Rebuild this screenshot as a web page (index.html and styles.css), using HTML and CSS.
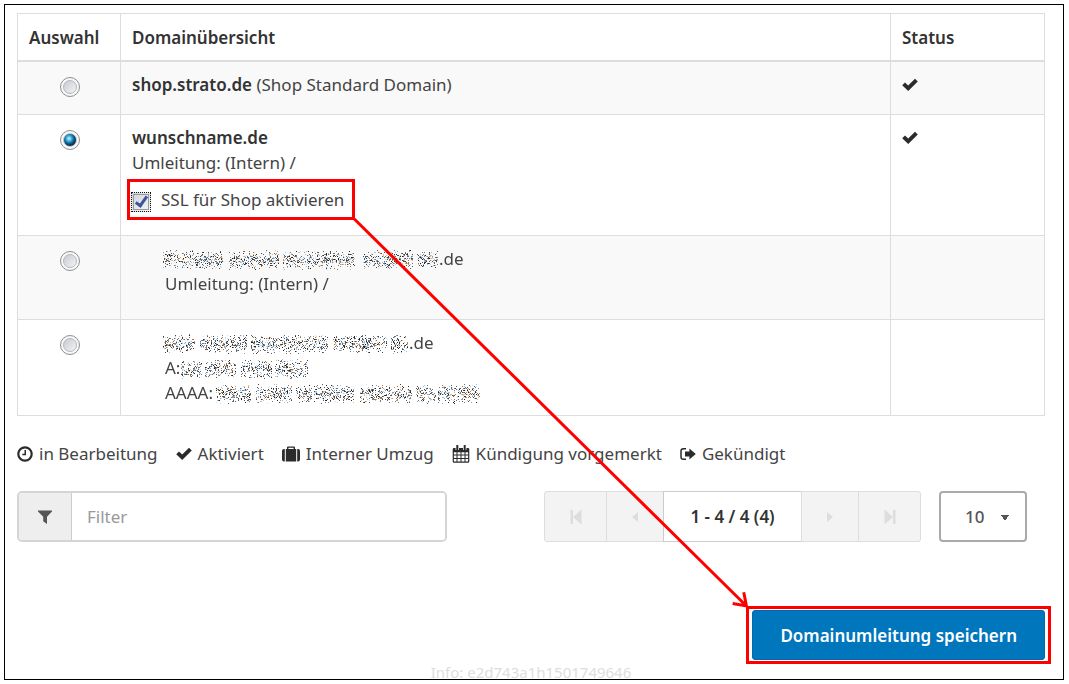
FILE: index.html
```html
<!DOCTYPE html>
<html lang="de">
<head>
  <meta charset="UTF-8" />
  <meta name="viewport" content="width=device-width, initial-scale=1" />
  <title>Domainübersicht</title>
  <link rel="stylesheet" href="styles.css">
</head>
<body>
  <svg class="sprite" aria-hidden="true">
    <symbol id="check" viewBox="0 0 16 16"><path d="M0.2 8.2 L3 5.4 L6.2 8.4 L13 1.8 L15.8 4.5 L6.2 14.1 Z" /></symbol>
    <symbol id="clock" viewBox="0 0 16 16"><circle cx="8" cy="8" r="6.7" fill="none" stroke="currentColor" stroke-width="2.2" /><path d="M7.5 4 H9 V9.2 H5.3 V7.8 H7.5 Z" /></symbol>
    <symbol id="briefcase" viewBox="0 0 18 16"><path d="M5 3 V1.5 Q5 0.5 6 0.5 H12 Q13 0.5 13 1.5 V3 H14.2 V15.5 H3.8 V3 Z M6.4 3 H11.6 V1.8 H6.4 Z M2.8 3 V15.5 H2 Q0 15.5 0 13.5 V5 Q0 3 2 3 Z M15.2 3 H16 Q18 3 18 5 V13.5 Q18 15.5 16 15.5 H15.2 Z" fill-rule="evenodd" /></symbol>
    <symbol id="calendar" viewBox="0 0 17 18"><path d="M1.5 3 H15.5 Q16.8 3 16.8 4.2 V16.6 Q16.8 17.8 15.5 17.8 H1.5 Q0.2 17.8 0.2 16.6 V4.2 Q0.2 3 1.5 3 Z M1.4 7.2 V9.4 H4 V7.2 Z M5 7.2 V9.4 H8 V7.2 Z M9 7.2 V9.4 H12 V7.2 Z M13 7.2 V9.4 H15.6 V7.2 Z M1.4 10.4 V13 H4 V10.4 Z M5 10.4 V13 H8 V10.4 Z M9 10.4 V13 H12 V10.4 Z M13 10.4 V13 H15.6 V10.4 Z M1.4 14 V16.6 H4 V14 Z M5 14 V16.6 H8 V14 Z M9 14 V16.6 H12 V14 Z M13 14 V16.6 H15.6 V14 Z" fill-rule="evenodd" /><path d="M4.8 1.2 V5 M12.2 1.2 V5" stroke="#fff" stroke-width="3.4" /><path d="M4.8 0.6 V5 M12.2 0.6 V5" stroke="currentColor" stroke-width="2" stroke-linecap="round" /></symbol>
    <symbol id="signout" viewBox="0 0 16 16"><path d="M6 2.7 H3.4 Q1 2.7 1 5 V11 Q1 13.3 3.4 13.3 H6" fill="none" stroke="currentColor" stroke-width="1.5" /><path d="M5 5.6 H9.4 V2.4 L15.8 8 L9.4 13.6 V10.4 H5 Z" /></symbol>
    <symbol id="funnel" viewBox="0 0 16 16"><path d="M1 1.5 H15 V2.4 L10 7.8 V15 L6.2 12.2 V7.8 L1 2.4 Z" /></symbol>
    <symbol id="first" viewBox="0 0 12 16"><path d="M0.5 1 H3 V15 H0.5 Z M11.5 0.5 V15.5 L3 8 Z" /></symbol>
    <symbol id="prev" viewBox="0 0 12 16"><path d="M9 3 V13 L3 8 Z" /></symbol>
    <symbol id="next" viewBox="0 0 12 16"><path d="M3 3 V13 L9 8 Z" /></symbol>
    <symbol id="last" viewBox="0 0 12 16"><path d="M9 1 H11.5 V15 H9 Z M0.5 0.5 V15.5 L9 8 Z" /></symbol>
  </svg>

  <main class="frame">
    <table class="domains">
      <thead>
        <tr>
          <th class="col-select">Auswahl</th>
          <th>Domainübersicht</th>
          <th class="col-status">Status</th>
        </tr>
      </thead>
      <tbody>
        <tr>
          <td class="select"><input type="radio" name="domain" aria-label="shop.strato.de"></td>
          <td><b>shop.strato.de</b> (Shop Standard Domain)</td>
          <td><svg class="icon"><use href="#check" /></svg></td>
        </tr>
        <tr>
          <td class="select"><input type="radio" name="domain" aria-label="wunschname.de" checked></td>
          <td class="active">
            <b>wunschname.de</b><br>
            Umleitung: (Intern) /
            <label class="ssl" id="ssl"><input type="checkbox" checked>SSL für Shop aktivieren</label>
          </td>
          <td><svg class="icon"><use href="#check" /></svg></td>
        </tr>
        <tr>
          <td class="select"><input type="radio" name="domain" aria-label="Domain 3"></td>
          <td class="sub redirect">
            <div class="line"><canvas class="noise" width="276" height="22" data-words="0-60,66-116,120-192,200-250,254-275"></canvas>.de</div>
            <div>Umleitung: (Intern) /</div>
          </td>
          <td></td>
        </tr>
        <tr>
          <td class="select"><input type="radio" name="domain" aria-label="Domain 4"></td>
          <td class="sub addresses">
            <div class="line"><canvas class="noise" width="246" height="22" data-words="0-32,37-84,88-165,170-224,228-245"></canvas>.de</div>
            <div class="line">A:<canvas class="noise" width="132" height="22" data-words="3-24,27-58,63-94,97-130"></canvas></div>
            <div class="line record">AAAA:<canvas class="noise" width="266" height="22" data-words="0-35,40-76,80-138,144-196,200-220,222-264"></canvas></div>
          </td>
          <td></td>
        </tr>
      </tbody>
    </table>

    <ul class="legend">
      <li><svg class="icon"><use href="#clock" /></svg>in Bearbeitung</li>
      <li><svg class="icon"><use href="#check" /></svg>Aktiviert</li>
      <li><svg class="icon wide"><use href="#briefcase" /></svg>Interner Umzug</li>
      <li><svg class="icon wide"><use href="#calendar" /></svg>Kündigung vorgemerkt</li>
      <li><svg class="icon"><use href="#signout" /></svg>Gekündigt</li>
    </ul>

    <div class="toolbar">
      <div class="filter">
        <label for="filter" aria-label="Filter"><svg class="icon"><use href="#funnel" /></svg></label>
        <input type="text" id="filter" placeholder="Filter">
      </div>
      <div class="pager">
        <button disabled aria-label="Erste Seite"><svg><use href="#first" /></svg></button>
        <button disabled aria-label="Vorherige Seite"><svg><use href="#prev" /></svg></button>
        <button class="current">1 - 4 / 4 (4)</button>
        <button disabled aria-label="Nächste Seite"><svg><use href="#next" /></svg></button>
        <button disabled aria-label="Letzte Seite"><svg><use href="#last" /></svg></button>
      </div>
      <select class="page-size" aria-label="Einträge pro Seite">
        <option>10</option>
        <option>25</option>
        <option>50</option>
      </select>
    </div>

    <div class="actions">
      <div class="mark" id="save"><button class="save">Domainumleitung speichern</button></div>
    </div>

    <footer class="info">Info: e2d743a1h1501749646</footer>
  </main>

  <svg class="arrow" id="arrow" aria-hidden="true"><path /></svg>

  <script>
    // sprayed dots over the hidden parts of the domain data
    const colors = ['#222', '#444', '#555', '#777', '#999', '#e0b98c', '#a8703c', '#8fc4ec', '#3f6ea8', '#c3e2f7'];
    let seed = 7;

    function random() {
      seed = (seed * 16807) % 2147483647;
      return seed / 2147483647;
    }

    document.querySelectorAll('.noise').forEach(canvas => {
      const ctx = canvas.getContext('2d');
      canvas.dataset.words.split(',').forEach(word => {
        const [from, to] = word.split('-').map(Number);
        const dots = (to - from) * 6;
        for (let i = 0; i < dots; i++) {
          const x = from + random() * (to - from);
          const y = 12 + (random() + random() - 1) * 10;
          ctx.fillStyle = colors[Math.floor(random() * colors.length)];
          ctx.fillRect(Math.floor(x), Math.floor(y), 1, 1);
        }
      });
    });

    // arrow from the SSL box to the save button
    function drawArrow() {
      const a = document.getElementById('ssl').getBoundingClientRect();
      const b = document.getElementById('save').getBoundingClientRect();
      const x1 = a.right - 1, y1 = a.bottom - 1;
      const x2 = b.left, y2 = b.top;
      const angle = Math.atan2(y2 - y1, x2 - x1);
      const tip = t => `${x2 - 14 * Math.cos(angle + t)} ${y2 - 14 * Math.sin(angle + t)}`;
      document.querySelector('#arrow path').setAttribute('d',
        `M${x1} ${y1} L${x2} ${y2} M${tip(0.6)} L${x2} ${y2} L${tip(-0.6)}`);
    }

    drawArrow();
    window.addEventListener('resize', drawArrow);
  </script>
</body>
</html>
```
FILE: styles.css
```css
*, *::before, *::after {
  box-sizing: border-box;
}
body {
  margin: 0;
  padding: 4px 5px 4px 4px;
  position: relative;
  background: #fff;
  color: #444;
  font-family: 'Noto Sans', 'Open Sans', sans-serif;
  font-size: 17px;
  line-height: 25px;
}
b, th {
  font-weight: 600;
  color: #333;
}
.sprite {
  display: none;
}
.frame {
  border: 1px solid #000;
  padding: 8px 18px 0 12px;
}
.icon {
  width: 16px;
  height: 16px;
  fill: currentColor;
  color: #2b2b2b;
}
.icon.wide {
  width: 18px;
  height: 18px;
}

/* table */
.domains {
  width: 100%;
  border-collapse: collapse;
  table-layout: fixed;
}
.domains th,
.domains td {
  border: 1px solid #ddd;
  padding: 10px 11px;
  text-align: left;
  vertical-align: top;
}
.domains th {
  padding-top: 11px;
  border-bottom: 2px solid #ddd;
}
.domains td .icon {
  display: block;
  margin-top: 5px;
}
.domains tbody tr:nth-child(odd) {
  background: #f9f9f9;
}
.domains .col-select {
  width: 103px;
  padding-right: 0;
}
.col-status {
  width: 154px;
}
.domains .select {
  padding: 15px 0 17px 2px;
  text-align: center;
}
.domains .active {
  padding-bottom: 15px;
}
.domains .sub {
  padding-left: 44px;
}
.domains .redirect {
  padding-bottom: 23px;
}
.line {
  display: flex;
  align-items: center;
}
.line .noise:first-child {
  margin-left: -2px;
}
.record {
  gap: 5px;
}
input[type="radio"] {
  appearance: none;
  display: block;
  width: 20px;
  height: 20px;
  margin: 0 auto;
  padding: 2px;
  border: 1px solid #8e8f8f;
  border-radius: 50%;
  background: #f8f8f8;
}
input[type="radio"]::before {
  content: '';
  display: block;
  width: 14px;
  height: 14px;
  border: 1px solid #b4b8bf;
  border-radius: 50%;
  background: linear-gradient(135deg, #c6cad2, #f4f4f4);
}
input[type="radio"]:checked::before {
  border-color: #c4cdd4;
  background: radial-gradient(circle at 42% 38%, #d8f4fc 0, #2fa5d4 3px, #0d5c8c 5px, #0b2c49 7px);
}
.ssl {
  display: flex;
  align-items: center;
  gap: 10px;
  width: max-content;
  height: 41px;
  margin: 4px 0 0 -5px;
  padding: 0 8px 0 1px;
  border: 3px solid #f00;
}
.ssl input {
  appearance: none;
  width: 20px;
  height: 20px;
  margin: 4px 0 0;
  display: grid;
  place-items: center;
  border: 1px dotted #111;
  outline: 1px solid #999;
  outline-offset: -3px;
  background: linear-gradient(135deg, #cfd3da, #f6f6f6);
}
.ssl input:checked::after {
  content: '';
  width: 7px;
  height: 13px;
  margin-bottom: 3px;
  border: solid #3c559f;
  border-width: 0 3px 3px 0;
  transform: rotate(35deg);
}

/* legend */
.legend {
  display: flex;
  flex-wrap: wrap;
  gap: 18px;
  margin: 25px 0;
  padding: 0;
  list-style: none;
}
.legend li {
  display: flex;
  align-items: center;
  gap: 6px;
}

/* filter and paging */
.toolbar {
  display: flex;
  height: 51px;
  padding-right: 18px;
}
.filter {
  display: flex;
  flex: 0 1 430px;
  min-width: 0;
  margin-right: auto;
  border: 2px solid #d5d5d5;
  border-radius: 5px;
  overflow: hidden;
}
.filter label {
  display: flex;
  align-items: center;
  justify-content: center;
  width: 53px;
  background: #eee;
  border-right: 1px solid #ccc;
}
.filter .icon {
  color: #555;
}
.filter input {
  flex: 1;
  min-width: 0;
  padding: 0 15px;
  border: none;
  font: inherit;
  color: #444;
}
.filter input::placeholder {
  color: #999;
}
.pager {
  display: flex;
}
.pager button {
  display: flex;
  align-items: center;
  justify-content: center;
  width: 58px;
  padding: 0;
  border: 1px solid #ddd;
  background: #f3f3f3;
  color: #ddd;
  font: inherit;
}
.pager button + button {
  margin-left: -1px;
}
.pager button:first-child,
.pager button:last-child {
  width: 63px;
}
.pager button:first-child {
  border-radius: 3px 0 0 3px;
}
.pager button:last-child {
  border-radius: 0 3px 3px 0;
}
.pager .current {
  width: 139px;
  border-color: #ccc;
  background: #fff;
  color: #333;
  font-weight: 600;
}
.pager svg {
  width: 12px;
  height: 16px;
  fill: currentColor;
}
.page-size {
  appearance: none;
  width: 88px;
  margin-left: 18px;
  padding: 0 24px;
  border: 2px solid #aaa;
  border-radius: 4px;
  background: linear-gradient(45deg, transparent 50%, #555 50%) 59px 22px / 5px 5px no-repeat,
    linear-gradient(-45deg, transparent 50%, #555 50%) 64px 22px / 5px 5px no-repeat, #fff;
  color: #555;
  font: inherit;
  font-weight: 500;
}

/* save */
.actions {
  display: flex;
  justify-content: flex-end;
  margin: 64px -6px 0 0;
}
.mark {
  padding: 1px 3px;
  border: 3px solid #f00;
}
.save {
  display: block;
  height: 50px;
  padding: 0 27px;
  border: 1px solid #0069b0;
  border-radius: 3px;
  background: #0076bd;
  color: #fff;
  font: inherit;
  font-weight: 600;
}
.info {
  height: 15px;
  color: #ddd;
  font-size: 15px;
  line-height: 17px;
  text-align: center;
}
.arrow {
  position: absolute;
  inset: 0;
  width: 100%;
  height: 100%;
  pointer-events: none;
}
.arrow path {
  fill: none;
  stroke: #f00;
  stroke-width: 3;
}
```
